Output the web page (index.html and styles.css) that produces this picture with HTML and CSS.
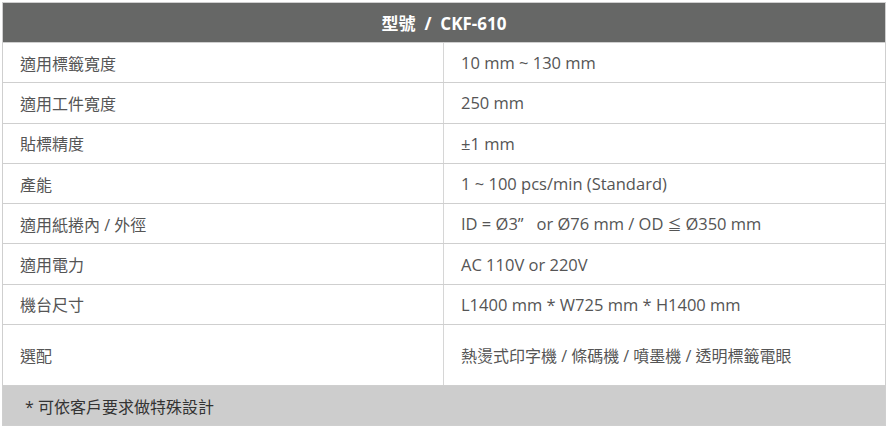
FILE: index.html
```html
<!DOCTYPE html>
<html lang="zh-Hant">
<head>
<meta charset="utf-8">
<title>CKF-610 規格</title>
<link rel="stylesheet" href="styles.css">
</head>
<body>
<div class="spec">
  <div class="spec-head">型號 &nbsp;/&nbsp; CKF-610</div>
  <div class="spec-row"><div class="cell label">適用標籤寬度</div><div class="cell value">10 mm ~ 130 mm</div></div>
  <div class="spec-row"><div class="cell label">適用工件寬度</div><div class="cell value">250 mm</div></div>
  <div class="spec-row"><div class="cell label">貼標精度</div><div class="cell value">±1 mm</div></div>
  <div class="spec-row"><div class="cell label">產能</div><div class="cell value">1 ~ 100 pcs/min (Standard)</div></div>
  <div class="spec-row"><div class="cell label">適用紙捲內 / 外徑</div><div class="cell value">ID = Ø3”&nbsp;&nbsp; or Ø76 mm / OD<span class="le">≦</span>Ø350 mm</div></div>
  <div class="spec-row"><div class="cell label">適用電力</div><div class="cell value">AC 110V or 220V</div></div>
  <div class="spec-row"><div class="cell label">機台尺寸</div><div class="cell value">L1400 mm * W725 mm * H1400 mm</div></div>
  <div class="spec-row tall"><div class="cell label">選配</div><div class="cell value cjk">熱燙式印字機 / 條碼機 / 噴墨機 / 透明標籤電眼</div></div>
  <div class="spec-foot">* 可依客戶要求做特殊設計</div>
</div>
</body>
</html>
```
FILE: styles.css
```css
html, body {
  margin: 0;
  padding: 0;
  background: #fff;
}
body {
  font-family: "Open Sans", "Noto Sans CJK TC", sans-serif;
  font-size: 16.5px;
  color: #555;
}
.spec {
  margin: 2px;
  border: 1px solid #cfcfcf;
}
.spec-head {
  box-sizing: border-box;
  height: 40px;
  background: #666766;
  color: #fff;
  font-weight: 700;
  font-size: 17px;
  display: flex;
  align-items: center;
  justify-content: center;
  border-bottom: 1px solid #cfcfcf;
}
.spec-row {
  box-sizing: border-box;
  height: 40.3px;
  display: grid;
  grid-template-columns: 1fr 1fr;
  border-bottom: 1px solid #cfcfcf;
}
.spec-row.tall {
  height: 61px;
}
.cell {
  display: flex;
  align-items: center;
  padding: 0 17px;
  white-space: pre;
}
.label {
  font-size: 16px;
  border-right: 1px solid #d6d6d6;
}
.value.cjk {
  font-size: 16px;
}
.le {
  font-family: "Noto Sans CJK TC", sans-serif;
  font-size: 14px;
  margin: 0 4px;
}
.spec-foot {
  height: 39px;
  background: #cdcdcd;
  color: #333;
  font-size: 16px;
  display: flex;
  align-items: center;
  padding-left: 22px;
}
```
